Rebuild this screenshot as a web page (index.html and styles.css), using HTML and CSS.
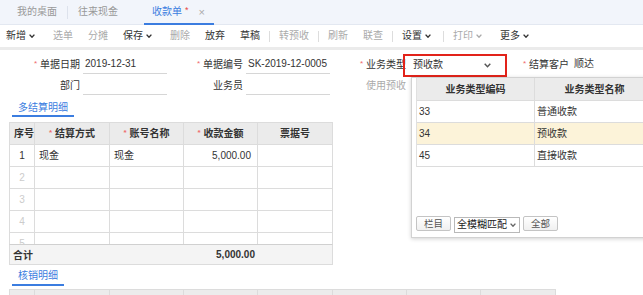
FILE: index.html
```html
<!DOCTYPE html>
<html lang="zh-CN">
<head>
<meta charset="utf-8">
<title>收款单</title>
<link rel="stylesheet" href="styles.css">
</head>
<body>
<div class="page">
<div class="tabbar">
  <div class="tab">我的桌面</div>
  <span class="tab-sep"></span>
  <div class="tab">往来现金</div>
  <div class="tab active">收款单<span class="tab-star">*</span><span class="tab-close">×</span></div>
</div>
<div class="toolbar">
  <span class="tb caret">新增<svg class="chev" viewBox="0 0 6 4"><polyline points="0.6,0.6 3,3.2 5.4,0.6"/></svg></span>
  <span class="tb off">选单</span>
  <span class="tb off">分摊</span>
  <span class="tb caret">保存<svg class="chev" viewBox="0 0 6 4"><polyline points="0.6,0.6 3,3.2 5.4,0.6"/></svg></span>
  <span class="tb off">删除</span>
  <span class="tb">放弃</span>
  <span class="tb">草稿</span>
  <span class="tb-sep"></span>
  <span class="tb off">转预收</span>
  <span class="tb-sep"></span>
  <span class="tb off">刷新</span>
  <span class="tb off">联查</span>
  <span class="tb-sep"></span>
  <span class="tb caret">设置<svg class="chev" viewBox="0 0 6 4"><polyline points="0.6,0.6 3,3.2 5.4,0.6"/></svg></span>
  <span class="tb-sep"></span>
  <span class="tb off caret">打印<svg class="chev" viewBox="0 0 6 4"><polyline points="0.6,0.6 3,3.2 5.4,0.6"/></svg></span>
  <span class="tb caret">更多<svg class="chev" viewBox="0 0 6 4"><polyline points="0.6,0.6 3,3.2 5.4,0.6"/></svg></span>
</div>
<div class="band"></div>

<div class="form">
  <div class="form-row">
    <div class="fg"><label class="lbl"><i class="req">*</i>单据日期</label><div class="fld">2019-12-31</div></div>
    <div class="fg"><label class="lbl"><i class="req">*</i>单据编号</label><div class="fld">SK-2019-12-0005</div></div>
    <div class="fg"><label class="lbl"><i class="req">*</i>业务类型</label>
      <div class="fld sel">预收款<svg class="sel-chev" viewBox="0 0 7 5"><polyline points="0.7,0.7 3.5,3.8 6.3,0.7"/></svg>
        <span class="mark"></span>
        <div class="dd">
          <div class="dd-grid">
            <div class="dh">业务类型编码</div><div class="dh">业务类型名称</div>
            <div class="dc">33</div><div class="dc">普通收款</div>
            <div class="dc hi">34</div><div class="dc hi">预收款</div>
            <div class="dc">45</div><div class="dc">直接收款</div>
          </div>
          <div class="dd-foot">
            <span class="btn">栏目</span>
            <span class="mini-sel">全模糊匹配<svg class="chev" viewBox="0 0 6 4"><polyline points="0.6,0.6 3,3.2 5.4,0.6"/></svg></span>
            <span class="btn">全部</span>
          </div>
        </div>
      </div>
    </div>
    <div class="fg"><label class="lbl"><i class="req">*</i>结算客户</label><div class="fld plain">顺达</div></div>
  </div>
  <div class="form-row">
    <div class="fg"><label class="lbl">部门</label><div class="fld"></div></div>
    <div class="fg"><label class="lbl">业务员</label><div class="fld"></div></div>
    <div class="fg"><label class="lbl muted">使用预收</label><div class="fld plain"></div></div>
  </div>
</div>

<div class="sec-tab">多结算明细</div>
<div class="grid-wrap">
  <div class="grid head">
    <div class="c">序号</div>
    <div class="c"><i class="req">*</i>结算方式</div>
    <div class="c"><i class="req">*</i>账号名称</div>
    <div class="c"><i class="req">*</i>收款金额</div>
    <div class="c">票据号</div>
  </div>
  <div class="grid-body">
    <div class="grid row">
      <div class="c num">1</div><div class="c">现金</div><div class="c">现金</div><div class="c amt">5,000.00</div><div class="c"></div>
    </div>
    <div class="grid row">
      <div class="c num dim">2</div><div class="c"></div><div class="c"></div><div class="c"></div><div class="c"></div>
    </div>
    <div class="grid row">
      <div class="c num dim">3</div><div class="c"></div><div class="c"></div><div class="c"></div><div class="c"></div>
    </div>
    <div class="grid row">
      <div class="c num dim">4</div><div class="c"></div><div class="c"></div><div class="c"></div><div class="c"></div>
    </div>
    <div class="grid row">
      <div class="c num dim">5</div><div class="c"></div><div class="c"></div><div class="c"></div><div class="c"></div>
    </div>
  </div>
  <div class="foot">
    <span class="foot-lbl">合计</span>
    <span class="foot-amt">5,000.00</span>
  </div>
</div>

<div class="sec-tab second">核销明细</div>
<div class="grid2">
  <div class="c"></div><div class="c"></div><div class="c"></div><div class="c"></div>
  <div class="c"></div><div class="c"></div><div class="c"></div><div class="c"></div>
</div>
</div>
</body>
</html>
```

FILE: styles.css
```css
* { box-sizing: border-box; }
html, body { margin: 0; padding: 0; background: #fff; overflow: hidden; }
body {
  font-family: "Liberation Sans", "Noto Sans CJK SC", sans-serif;
  font-size: 10px;
  color: #333;
}
.page {
  width: 643px;
  height: 295px;
  overflow: hidden;
}
i { font-style: normal; }

/* ---------- tab bar ---------- */
.tabbar {
  height: 25px;
  background: #f2f5fb;
  border-bottom: 1px solid #e3e8f1;
  display: flex;
  align-items: stretch;
  padding-left: 7px;
}
.tab {
  padding: 0 10px;
  line-height: 24px;
  color: #999;
  display: flex;
  align-items: center;
}
.tab-sep {
  width: 1px;
  height: 13px;
  align-self: center;
  background: #dde2ec;
}
.tab.active {
  margin-left: 16px;
  padding: 0 9px 0 8px;
  color: #3b7de0;
  border-bottom: 2px solid #3b7de0;
  height: 25px;
}
.tab-star { color: #e84444; margin-left: 3px; font-size: 9px; position: relative; top: -2px; }
.tab-close { color: #aaa; margin-left: 10px; font-size: 11px; }

/* ---------- toolbar ---------- */
.toolbar {
  height: 22px;
  display: flex;
  align-items: center;
  gap: 15px;
  padding-left: 6px;
  background: #fff;
}
.tb { color: #333; line-height: 14px; display: flex; align-items: center; white-space: nowrap; }
.tb.off { color: #aaa; }
.tb-sep { width: 1px; height: 11px; background: #ddd; margin: 0 -6px; }
.chev {
  width: 6px; height: 4px;
  margin-left: 3px; margin-right: 3px;
  fill: none; stroke: currentColor; stroke-width: 1.4;
  flex: none;
}
.band { height: 3px; background: #ebebeb; }

/* ---------- form ---------- */
.form { padding: 4px 0 0 4px; }
.form-row { display: flex; height: 21px; }
.fg { display: flex; align-items: flex-start; }
.lbl {
  width: 76px;
  text-align: right;
  line-height: 21px;
  color: #333;
  white-space: nowrap;
}
.lbl.muted { color: #aaa; }
.req { color: #ef6b6b; font-size: 8px; margin-right: 3px; position: relative; top: -2px; }
.fld {
  width: 84px;
  height: 20px;
  margin-left: 3px;
  padding-left: 2px;
  line-height: 19px;
  border-bottom: 1px solid #d6d6d6;
  white-space: nowrap;
}
.fld.plain { border-bottom-color: transparent; }
.fld.sel {
  position: relative;
  padding-left: 4px;
  border-bottom-color: transparent;
  line-height: 21px;
}
.sel-chev {
  position: absolute;
  right: 2px; top: 9px;
  width: 7px; height: 5px;
  fill: none; stroke: #555; stroke-width: 1.4;
}
.mark {
  position: absolute;
  left: -6px; top: 0;
  width: 104px; height: 23px;
  border: 2px solid #e2231a;
  pointer-events: none;
}

/* ---------- dropdown ---------- */
.dd {
  position: absolute;
  left: 2px; top: 23px;
  width: 242px; height: 161px;
  background: #fff;
  border: 1px solid #d2d2d2;
  box-shadow: 0 1px 4px rgba(0,0,0,0.18);
  padding: 0 4px 5px;
  display: flex;
  flex-direction: column;
  z-index: 5;
  line-height: 14px;
}
.dd-grid {
  display: grid;
  grid-template-columns: 118px 120px;
  border-left: 1px solid #e0e0e0;
}
.dh {
  height: 23px;
  background: #ebebeb;
  font-weight: bold;
  text-align: center;
  line-height: 23px;
  border-right: 1px solid #dcdcdc;
  border-bottom: 1px solid #dcdcdc;
}
.dc {
  height: 22px;
  line-height: 21px;
  padding-left: 2px;
  border-bottom: 1px solid #dcdcdc;
}
.dc:nth-child(odd) { border-right: 1px solid #dcdcdc; }
.dc.hi { background: #fcf3d9; }
.dd-foot {
  margin-top: auto;
  display: flex;
  align-items: center;
  gap: 3px;
}
.btn {
  height: 15px;
  padding: 0 7px;
  line-height: 13px;
  border: 1px solid #c4c4c4;
  border-radius: 2px;
  background: linear-gradient(#fff, #f0f0f0);
  color: #555;
  font-size: 9.5px;
  position: relative;
  top: -1px;
}
.mini-sel {
  height: 16px;
  width: 66px;
  padding-left: 2px;
  line-height: 14px;
  border: 1px solid #b9b9b9;
  background: #fff;
  color: #222;
  display: flex;
  align-items: center;
  white-space: nowrap;
  position: relative;
  top: 1px;
}
.mini-sel .chev { margin-left: 3px; margin-right: 0; color: #666; }

/* ---------- section tabs ---------- */
.sec-tab {
  margin-left: 12px;
  width: max-content;
  padding: 5px 6px 0;
  line-height: 14px;
  color: #3b7de0;
  border-bottom: 2px solid #3b7de0;
}
.sec-tab.second { padding-top: 4px; padding-bottom: 1px; margin-top: 0; }

/* ---------- detail grid ---------- */
.grid-wrap {
  margin: 5px 0 0 9px;
  width: 324px;
}
.grid {
  display: grid;
  grid-template-columns: 25px 75px 74px 74px 75px;
  border-left: 1px solid #dcdcdc;
}
.grid.head { border-top: 1px solid #dcdcdc; }
.c {
  height: 22px;
  border-right: 1px solid #dcdcdc;
  border-bottom: 1px solid #dcdcdc;
  line-height: 21px;
  padding: 0 4px;
  white-space: nowrap;
}
.head .c {
  background: #ebebeb;
  font-weight: bold;
  text-align: center;
  height: 22px;
  line-height: 21px;
}
.grid-body { height: 99px; overflow: hidden; }
.num { text-align: center; padding: 0; }
.dim { color: #ccc; }
.amt { text-align: right; padding-right: 6px; }
.foot {
  height: 21px;
  display: flex;
  justify-content: space-between;
  align-items: center;
  background: #f4f4f4;
  border: 1px solid #dcdcdc;
  border-top-color: #d0d0d0;
  font-weight: bold;
  padding: 0 77px 0 3px;
}

/* ---------- bottom grid ---------- */
.grid2 {
  margin: 3px 0 0 9px;
  display: grid;
  grid-template-columns: 25px 75px 74px 74px 75px 74px 74px 75px;
  width: max-content;
  border-left: 1px solid #dcdcdc;
  border-top: 1px solid #dcdcdc;
}
.grid2 .c { background: #ececec; }
```
